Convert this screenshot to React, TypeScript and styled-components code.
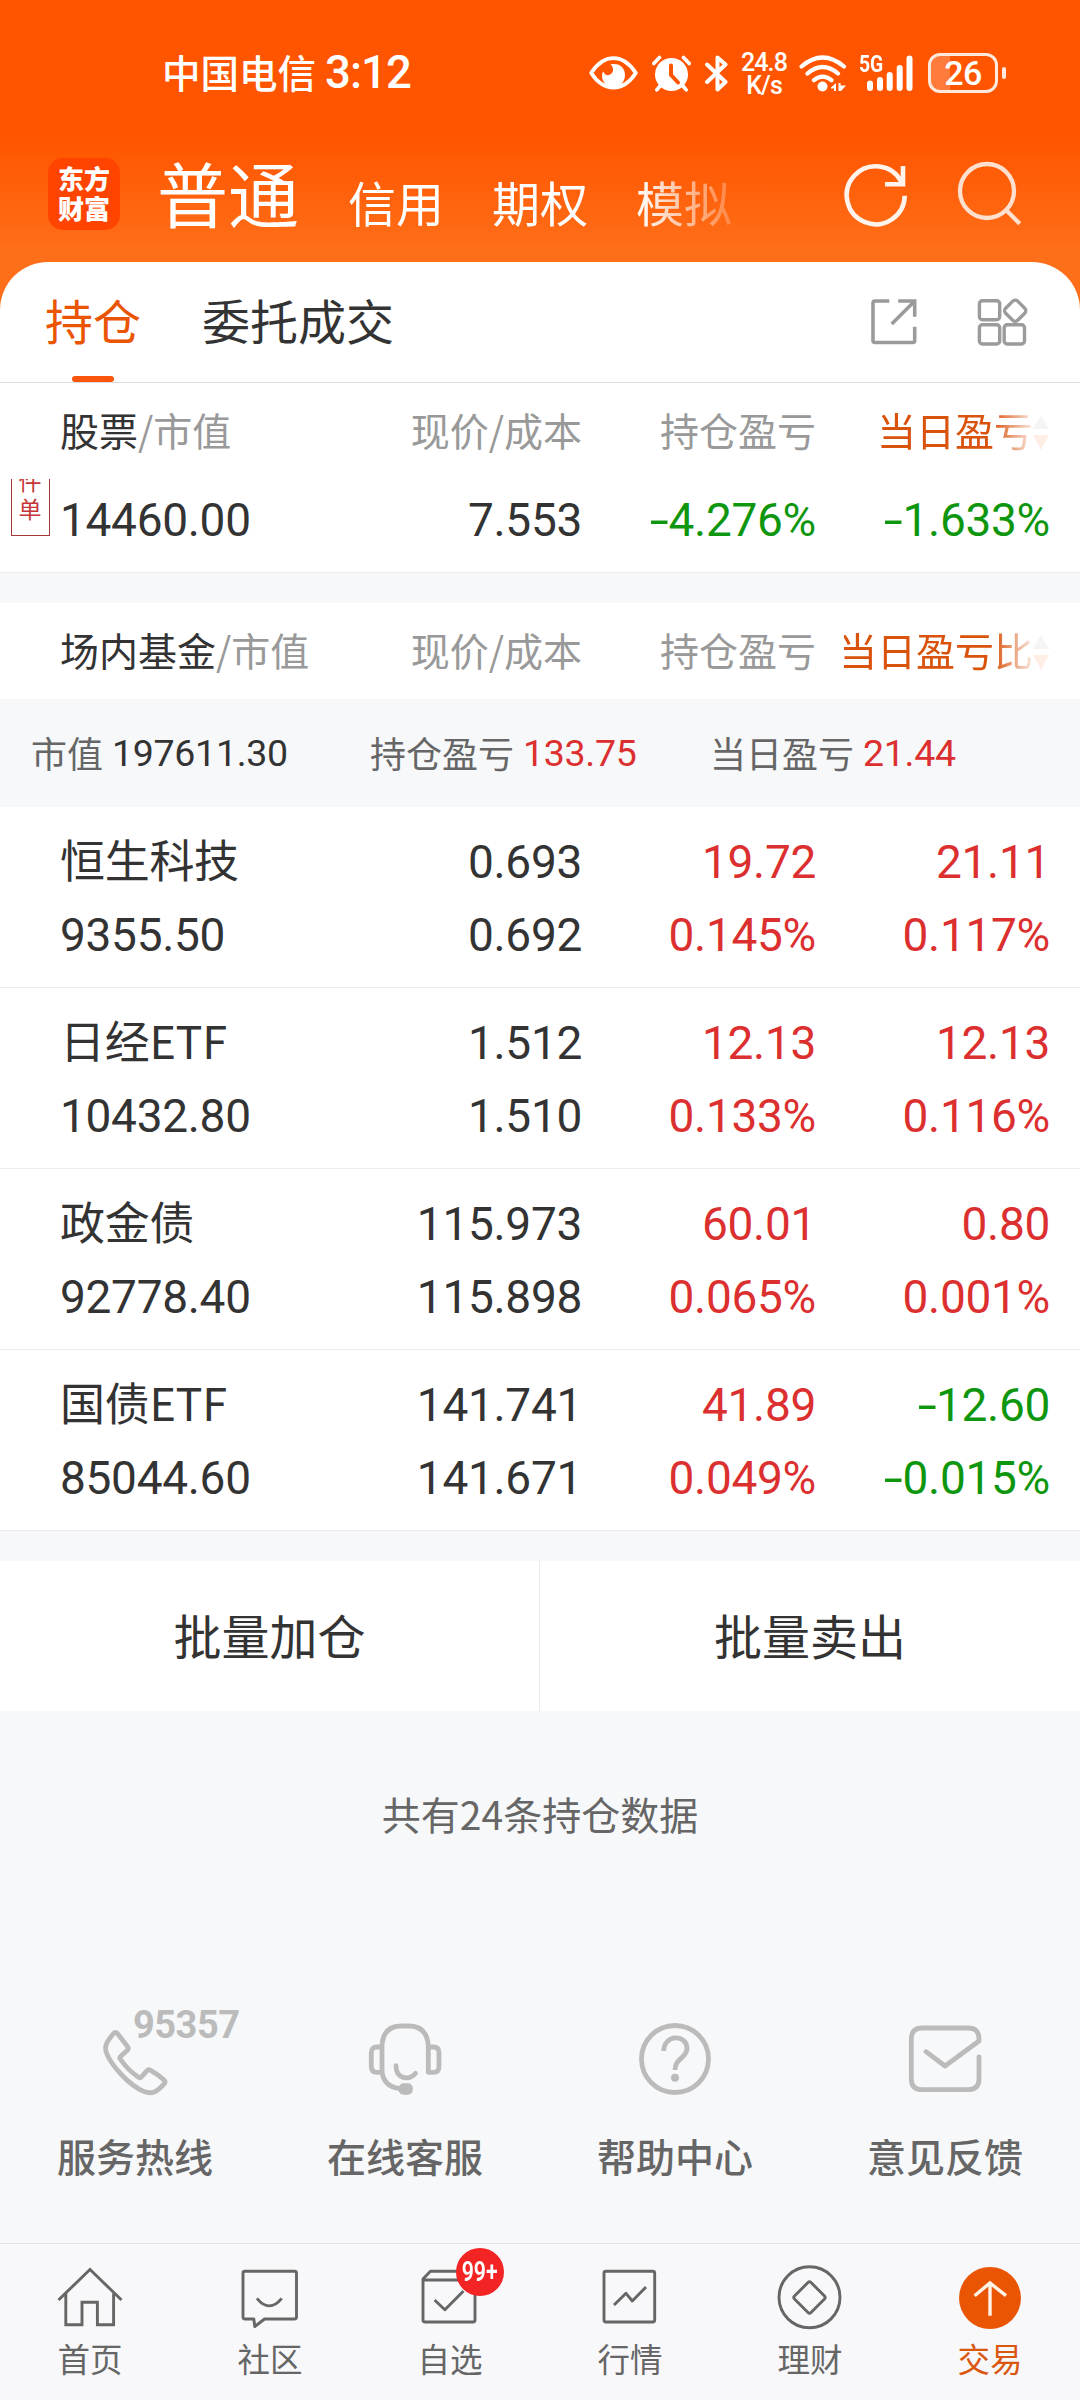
import React from 'react';
import styled, { createGlobalStyle } from 'styled-components';

const cjk = `'Noto Sans CJK SC', sans-serif`;
const num = `Roboto, 'Noto Sans CJK SC', sans-serif`;

const ink = '#333333';
const grey = '#999999';
const mid = '#666666';
const red = '#dc2f2f';
const green = '#0f960f';
const brand = '#ea5504';

const GlobalStyle = createGlobalStyle`
  * { box-sizing: border-box; }
  body { margin: 0; background: #f7f8fa; }
`;

const Page = styled.main`
  width: 1080px;
  height: 2400px;
  display: flex;
  flex-direction: column;
  overflow: hidden;
  background: #f7f8fa;
  color: ${ink};
  font-family: ${cjk};
`;

const Hero = styled.header`
  flex: none;
  height: 322px;
  margin-bottom: -60px;
  background: linear-gradient(#ff5500 0, #ff5500 140px, #ff6e18 250px, #ff6e18 100%);
  color: #fff;
`;

const StatusBar = styled.div`
  display: flex;
  align-items: center;
  height: 146px;
  padding: 0 75px 0 162px;
`;

const Carrier = styled.span`
  font: 500 38.5px/46px ${cjk};
  margin-top: -4px;
`;

const Clock = styled.span`
  font: 500 45.5px/46px ${num};
  letter-spacing: -0.9px;
  margin-left: 9px;
`;

const StatusIcons = styled.div`
  display: flex;
  align-items: center;
  margin-left: auto;
`;

const NetSpeed = styled.div`
  display: flex;
  flex-direction: column;
  align-items: center;
  width: 48px;
  margin: 1px 11px 0 12px;
  font: 500 25px/23px ${num};
  letter-spacing: -0.9px;
`;

const Signal = styled.div`
  position: relative;
  width: 56px;
  height: 36px;
  margin: 0 13px 0 12px;
`;

const SignalTag = styled.span`
  position: absolute;
  left: 0;
  top: -1px;
  font: 700 24.5px/20px ${num};
  transform: scaleX(0.79);
  transform-origin: left;
`;

const Battery = styled.div`
  position: relative;
  display: flex;
  align-items: center;
  justify-content: center;
  width: 70px;
  height: 40px;
  border: 3px solid #ffe9dc;
  border-radius: 12px;
  background: linear-gradient(90deg, #ff7b3c 19px, transparent 19px);
  font: 500 34px/34px ${num};
  letter-spacing: -0.6px;
  margin-right: 7px;

  &::after {
    content: '';
    position: absolute;
    right: -11px;
    top: 11px;
    width: 4px;
    height: 12px;
    border-radius: 2px;
    background: #ffe9dc;
  }
`;

const AccountBar = styled.div`
  display: flex;
  align-items: center;
  height: 96px;
  padding: 0 58px 0 48px;
`;

const Logo = styled.div`
  flex: none;
  display: flex;
  flex-direction: column;
  justify-content: center;
  width: 72px;
  height: 72px;
  margin-right: 37px;
  padding-bottom: 2px;
  border-radius: 15px;
  background: #ff4400;
  font: 900 26px/30px ${cjk};
  text-align: center;
`;

const AccountTabs = styled.nav`
  display: flex;
  align-items: baseline;
  gap: 48px;
  flex: none;
  width: 574px;
  height: 102px;
  overflow: hidden;
  mask-image: linear-gradient(90deg, #000 480px, transparent 600px);
`;

const AccountTab = styled.span<{ $on?: boolean }>`
  flex: none;
  font: 400 ${p => (p.$on ? 71 : 48)}px/96px ${cjk};
  margin-right: ${p => (p.$on ? 1 : 0)}px;
`;

const HeroActions = styled.div`
  display: flex;
  gap: 50px;
  margin-left: auto;
`;

const Panel = styled.section`
  flex: none;
  position: relative;
  border-radius: 48px 48px 0 0;
  background: #fff;
`;

const TabBar = styled.div`
  display: flex;
  align-items: stretch;
  height: 121px;
  padding: 0 53px 0 45px;
  border-bottom: 1px solid #dcdcdc;
`;

const Tab = styled.button<{ $on?: boolean }>`
  display: flex;
  flex-direction: column;
  align-items: center;
  justify-content: space-between;
  padding: 23px 0 0;
  margin-right: 61px;
  border: 0;
  background: none;
  color: ${p => (p.$on ? brand : ink)};
  font: 400 48px/68px ${cjk};

  &::after {
    content: '';
    width: 42px;
    height: 6px;
    border-radius: 3px;
    background: ${p => (p.$on ? '#f9560c' : 'transparent')};
  }
`;

const TabTools = styled.div`
  display: flex;
  align-items: center;
  gap: 60px;
  margin-left: auto;
`;

const HeadRow = styled.div`
  display: grid;
  grid-template-columns: 291px 231px 234px 234px;
  align-items: center;
  height: 96px;
  padding: 0 0 4px 60px;
  color: ${grey};
  font: 400 39px/60px ${cjk};
`;

const HeadCell = styled.div<{ $end?: boolean }>`
  white-space: nowrap;
  text-align: ${p => (p.$end ? 'right' : 'left')};
  b { color: ${ink}; font-weight: 400; }
`;

const SortCell = styled.div`
  display: flex;
  justify-content: flex-end;
  align-items: center;
  width: 205px;
  margin-left: 28px;
  overflow: hidden;
  white-space: nowrap;
  color: #d9530c;
  mask-image: linear-gradient(90deg, #000 148px, rgba(0, 0, 0, 0.1) 190px);
`;

const SortText = styled.span`
  flex: none;
`;

const SortMark = styled.svg`
  flex: none;
  margin-top: 8px;
`;

const HoldingRow = styled.div<{ $single?: boolean }>`
  position: relative;
  display: grid;
  grid-template-columns: 291px 231px 234px 234px;
  align-items: start;
  height: ${p => (p.$single ? 94 : 181)}px;
  padding: ${p => (p.$single ? 5 : 19)}px 0 0 60px;
  border-bottom: 1px solid #ececee;
`;

const Pair = styled.div<{ $end?: boolean; $tone?: string }>`
  display: flex;
  flex-direction: column;
  align-items: ${p => (p.$end ? 'flex-end' : 'flex-start')};
  color: ${p => p.$tone || ink};
  font: 400 46px/73px ${num};
  letter-spacing: -0.3px;
`;

const Name = styled.span`
  font: 400 45px/73px ${cjk};
  margin: -4px 0 4px;
`;

const Minus = styled.span`
  display: inline-block;
  transform: scaleX(1.5);
  transform-origin: right;
`;

const OrderTag = styled.span`
  position: absolute;
  left: 11px;
  top: 0;
  display: flex;
  flex-direction: column;
  justify-content: flex-end;
  width: 39px;
  height: 57px;
  overflow: hidden;
  padding: 0 1px 13px 0;
  border: 1px solid #a33a3a;
  border-top: 0;
  color: #c63636;
  font: 400 23px/28px ${cjk};
  text-align: center;
`;

const Gap = styled.div`
  height: 30px;
  background: #f7f8fa;
`;

const Summary = styled.div`
  display: grid;
  grid-template-columns: 339px 340px 1fr;
  align-items: center;
  height: 108px;
  padding-left: 31px;
  background: #f7f8fa;
  color: ${mid};
  font: 400 36px/60px ${cjk};
`;

const SummaryItem = styled.div`
  display: flex;
  align-items: center;
  gap: 9px;
`;

const SummaryLabel = styled.span`
  margin-top: -3px;
`;

const Figure = styled.span<{ $tone?: string }>`
  color: ${p => p.$tone || ink};
  font: 400 37.5px/60px ${num};
  letter-spacing: -0.3px;
`;

const BatchBar = styled.div`
  display: grid;
  grid-template-columns: 539px 541px;
  height: 150px;
  background: #fff;
`;

const BatchButton = styled.button`
  border: 0;
  padding: 0 0 4px;
  background: none;
  color: ${ink};
  font: 400 48px/60px ${cjk};

  & + & { border-left: 1px solid #ececee; }
`;

const Total = styled.p`
  flex: none;
  margin: 72px 0 0;
  text-align: center;
  color: ${mid};
  font: 400 39px/60px ${cjk};
`;

const Services = styled.div`
  flex: none;
  display: grid;
  grid-template-columns: repeat(4, 1fr);
  margin-top: 180px;
`;

const Service = styled.div`
  position: relative;
  display: flex;
  flex-direction: column;
  align-items: center;
  color: ${mid};
  font: 500 39px/60px ${cjk};
  gap: 30px;
`;

const Hotline = styled.span`
  position: absolute;
  left: 133px;
  top: -17px;
  color: #bbbbbb;
  font: 700 38px/38px ${num};
  letter-spacing: -0.5px;
`;

const NavBar = styled.nav`
  flex: none;
  display: grid;
  grid-template-columns: repeat(6, 1fr);
  height: 157px;
  margin-top: auto;
  border-top: 1px solid #dfe0e2;
  background: #f8f8fa;
`;

const NavItem = styled.div<{ $on?: boolean }>`
  position: relative;
  display: flex;
  flex-direction: column;
  align-items: center;
  padding-top: 21px;
  color: ${p => (p.$on ? '#d9570f' : mid)};
  font: 400 32.5px/50px ${cjk};
  gap: 4px;
`;

const Badge = styled.span`
  position: absolute;
  left: 96px;
  top: 4px;
  display: flex;
  align-items: center;
  justify-content: center;
  width: 48px;
  height: 48px;
  border-radius: 50%;
  background: #f22424;
  color: #fff;
  font: 600 28px/48px ${num};

  span { transform: scaleX(0.76); }
`;

const Line = ({ w, h, sw, color = 'currentColor', children }: any) => (
  <svg width={w} height={h} viewBox={`0 0 ${w} ${h}`} fill="none" stroke={color} strokeWidth={sw}
    strokeLinejoin="round" overflow="visible">{children}</svg>
);

const IconGroup = styled.div`
  display: flex;
  align-items: center;
  gap: 14px;
`;

const EyeIcon = () => (
  <svg width="49" height="34" viewBox="0 0 49 34" fill="none">
    <path d="M2.2 17C8 8 15 2.2 24.5 2.2S41 8 46.8 17C41 26 34 31.6 24.5 31.6S8 26 2.2 17Z" stroke="#fff" strokeWidth="3.8" strokeLinejoin="round" />
    <path d="M21.500 8.200C31 6.500 36 12 36 19C36 26 31 31 24.500 31S13 26 13 20C13 18 13.500 16.500 14.500 15.500C15.500 19 18.500 20 21 18.500C25 16.500 25 11.500 21.500 8.200Z" fill="#fff" />
  </svg>
);

const AlarmIcon = () => (
  <svg width="39" height="37" viewBox="0 0 39 37" fill="none" strokeLinecap="round">
    <circle cx="19.500" cy="19.500" r="16.500" fill="#fff" />
    <path d="M1.800 8.500L7.500 2.500M37.200 8.500L31.500 2.500M8 31L4.800 34.800M31 31L34.200 34.800" stroke="#fff" strokeWidth="3.600" />
    <path d="M19 10.500V20L26 27.500" stroke="#ff5500" strokeWidth="4" strokeLinejoin="round" />
  </svg>
);

const BluetoothIcon = () => (
  <svg width="23" height="37" viewBox="0 0 23 37" fill="none" stroke="#fff" strokeWidth="4" strokeLinejoin="round" strokeLinecap="round">
    <path d="M2 9.500L20.500 27L12.500 34.500V2.500L20.500 9.500L2 27" />
  </svg>
);

const WifiIcon = () => (
  <svg width="48" height="37" viewBox="0 0 48 37" fill="none" stroke="#fff" strokeWidth="4.200" strokeLinecap="round">
    <path d="M2.500 11.500Q23.500 -6.500 45 11.500M8.500 18.500Q23.500 5.500 39 18.500M15 25.200Q23.500 18 32.500 25.200" />
    <circle cx="23.500" cy="31.500" r="5" fill="#fff" stroke="none" />
    <path d="M32 32.500L37 28V36H35V33.500H32ZM39.500 28H41.500V30.500H47L42 36H39.500Z" fill="#fff" stroke="none" />
  </svg>
);

const SignalIcon = () => (
  <svg width="56" height="36" viewBox="0 0 56 36" stroke="#fff" strokeWidth="6" strokeLinecap="round">
    <path d="M11 28.500V33M21 25V33M30.700 20V33M40.700 13V33M50.500 3.500V33" />
  </svg>
);

const services = [
  {
    label: '服务热线',
    art: (
      <path d="M16.400 9.300Q17.500 9.300 18 10L28.500 23.500Q30 25.500 28.500 27L21.500 33.500Q20.300 34.700 21.300 36Q29 47.500 40 54.500Q41.300 55.300 42.400 54L48 47.600Q49.500 46 51.300 47.200Q59 51.500 65 57Q67 58.800 65.300 60.600C57.500 69.500 53 71.500 45 68.500C30 62.500 12 42 7.500 30C5 23 7.500 19 14.500 10.500Q15.400 9.300 16.400 9.300Z" />
    ),
  },
  {
    label: '在线客服',
    art: (
      <>
        <path d="M30.500 65.700Q13 63 13 46V23Q14 3 32 3H40Q58 3 59.300 23V49.300H64.500Q70 49.300 70 43.500V30Q70 24 64.500 24H59.300M13 24H8Q2.300 24 2.300 30V43.500Q2.300 49.300 8 49.300H13" />
        <path d="M27 42.700C27 56 40 58 46.500 50.300" strokeLinecap="round" />
        <rect x="29.600" y="60.300" width="14.200" height="11.500" rx="5" fill="#bbb" stroke="none" />
      </>
    ),
  },
  {
    label: '帮助中心',
    art: (
      <>
        <circle cx="36" cy="36" r="33.500" />
        <path d="M24.800 28C24.800 11 48 11 48 25.500C48 35 36 35 36 47" />
        <circle cx="36" cy="54.700" r="4" fill="#bbb" stroke="none" />
      </>
    ),
  },
  {
    label: '意见反馈',
    art: (
      <path strokeLinecap="round" d="M17 28.700L36 43L70 18V16Q70 5 59 5H13Q2.300 5 2.300 16V55.700Q2.300 66.700 13 66.700H59Q70 66.700 70 55.700V34" />
    ),
  },
];

const navItems = [
  {
    label: '首页',
    art: <path strokeLinejoin="miter" d="M0.500 35L32 4.500L63.500 35M7.800 28.500V59.700H24V37.300H39.400V59.700H55.600V28.500" />,
  },
  {
    label: '社区',
    art: <path d="M7 6.300H56.500Q58.500 6.300 58.500 8.300V52Q58.500 54 56.500 54H26.500L16.800 61.500L15.800 54H7Q5 54 5 52V8.300Q5 6.300 7 6.300ZM18.900 33.300Q31.300 48.500 43.700 33.300" />,
  },
  {
    label: '自选',
    badge: '99+',
    art: <path d="M5 15H57V55Q57 57 55 57H7Q5 57 5 55V14L12.400 6.300H50L57 15M16.600 35L26.900 44.700L45.500 26" />,
  },
  {
    label: '行情',
    art: <path d="M8 6.300H54.700Q56.700 6.300 56.700 8.300V55Q56.700 57 54.700 57H8Q6 57 6 55V8.300Q6 6.300 8 6.300ZM16 40L28 28.300L34.300 36L48 22" />,
  },
  {
    label: '理财',
    art: (
      <>
        <circle cx="31.500" cy="32.300" r="30.500" />
        <path d="M30 17.500Q31.500 16 33 17.500L46.500 31Q48 32.500 46.500 34L33 47.500Q31.500 49 30 47.500L16.500 34Q15 32.500 16.500 31Z" />
      </>
    ),
  },
  {
    label: '交易',
    on: true,
    art: (
      <>
        <circle cx="32" cy="33" r="31" fill={brand} stroke="none" />
        <path d="M32 50.700V18.500M16.600 30.700L32 18L48 30.700" stroke="#fff3e6" strokeLinejoin="miter" strokeWidth="3.400" />
      </>
    ),
  },
];

const holdings = [
  { name: '恒生科技', value: '9355.50', price: ['0.693', '0.692'], total: ['19.72', '0.145%'], day: ['21.11', '0.117%'] },
  { name: '日经ETF', value: '10432.80', price: ['1.512', '1.510'], total: ['12.13', '0.133%'], day: ['12.13', '0.116%'] },
  { name: '政金债', value: '92778.40', price: ['115.973', '115.898'], total: ['60.01', '0.065%'], day: ['0.80', '0.001%'] },
  { name: '国债ETF', value: '85044.60', price: ['141.741', '141.671'], total: ['41.89', '0.049%'], day: ['-12.60', '-0.015%'] },
];

const Amount = ({ v }: { v: string }) => (
  <span>{v[0] === '-' ? <><Minus>-</Minus>{v.slice(1)}</> : v}</span>
);

const toneOf = (v: string) => (v[0] === '-' ? green : red);

const TableHead = ({ title, sort }: { title: string; sort: string }) => (
  <HeadRow>
    <HeadCell><b>{title}</b>/市值</HeadCell>
    <HeadCell $end>现价/成本</HeadCell>
    <HeadCell $end>持仓盈亏</HeadCell>
    <SortCell>
      <SortText>{sort}</SortText>
      <SortMark width="16" height="36" viewBox="0 0 16 36">
        <path d="M8 0L16 14H0Z" fill="#999" />
        <path d="M8 35L16 20H0Z" fill="#f9560c" />
      </SortMark>
    </SortCell>
  </HeadRow>
);

export default function App() {
  return (
    <Page>
      <GlobalStyle />
      <Hero>
        <StatusBar>
          <Carrier>中国电信</Carrier>
          <Clock>3:12</Clock>
          <StatusIcons>
            <IconGroup>
              <EyeIcon />
              <AlarmIcon />
              <BluetoothIcon />
            </IconGroup>
            <NetSpeed><span>24.8</span><span>K/s</span></NetSpeed>
            <WifiIcon />
            <Signal><SignalTag>5G</SignalTag><SignalIcon /></Signal>
            <Battery>26</Battery>
          </StatusIcons>
        </StatusBar>
        <AccountBar>
          <Logo><span>东方</span><span>财富</span></Logo>
          <AccountTabs>
            <AccountTab $on>普通</AccountTab>
            <AccountTab>信用</AccountTab>
            <AccountTab>期权</AccountTab>
            <AccountTab>模拟</AccountTab>
          </AccountTabs>
          <HeroActions>
            <Line w={64} h={64} sw={4.6} color="#fff3ec">
              <path d="M60.700 33.700A29 29 0 1 1 57.500 20" />
              <path d="M59 4V22.300H41" strokeLinejoin="miter" />
            </Line>
            <Line w={64} h={64} sw={4.3} color="#ffe0cf">
              <circle cx="29" cy="29" r="27" />
              <path d="M47.600 47.500L61.700 61.700" />
            </Line>
          </HeroActions>
        </AccountBar>
      </Hero>

      <Panel>
        <TabBar>
          <Tab $on>持仓</Tab>
          <Tab>委托成交</Tab>
          <TabTools>
            <Line w={46} h={46} sw={3.6} color="#9b9b9b">
              <path d="M18.300 2H4Q2 2 2 4V41.500Q2 43.500 4 43.500H41.700Q43.700 43.500 43.700 41.500V27.700" />
              <path d="M27.200 2H43.700V17.700M43.700 2L20.700 25" strokeLinejoin="miter" />
            </Line>
            <Line w={50} h={48} sw={3.4} color="#9b9b9b">
              <rect x="2.400" y="2.700" width="20.300" height="19" rx="3" />
              <rect x="2.400" y="26.700" width="20.300" height="19.300" rx="3" />
              <rect x="27.200" y="26.700" width="20.300" height="19.300" rx="3" />
              <rect x="29.700" y="4.200" width="17" height="17" rx="3.500" transform="rotate(45 38.200 12.700)" />
            </Line>
          </TabTools>
        </TabBar>

        <TableHead title="股票" sort="当日盈亏" />
        <HoldingRow $single>
          <OrderTag><span>件</span><span>单</span></OrderTag>
          <Pair>14460.00</Pair>
          <Pair $end>7.553</Pair>
          <Pair $end $tone={green}><Amount v="-4.276%" /></Pair>
          <Pair $end $tone={green}><Amount v="-1.633%" /></Pair>
        </HoldingRow>
        <Gap />

        <TableHead title="场内基金" sort="当日盈亏比" />
        <Summary>
          <SummaryItem><SummaryLabel>市值</SummaryLabel><Figure>197611.30</Figure></SummaryItem>
          <SummaryItem><SummaryLabel>持仓盈亏</SummaryLabel><Figure $tone={red}>133.75</Figure></SummaryItem>
          <SummaryItem><SummaryLabel>当日盈亏</SummaryLabel><Figure $tone={red}>21.44</Figure></SummaryItem>
        </Summary>
        {holdings.map(r => (
          <HoldingRow key={r.name}>
            <Pair><Name>{r.name}</Name><span>{r.value}</span></Pair>
            <Pair $end>{r.price.map(v => <Amount key={v} v={v} />)}</Pair>
            <Pair $end $tone={toneOf(r.total[0])}>{r.total.map(v => <Amount key={v} v={v} />)}</Pair>
            <Pair $end $tone={toneOf(r.day[0])}>{r.day.map(v => <Amount key={v} v={v} />)}</Pair>
          </HoldingRow>
        ))}
        <Gap />
        <BatchBar>
          <BatchButton>批量加仓</BatchButton>
          <BatchButton>批量卖出</BatchButton>
        </BatchBar>
      </Panel>

      <Total>共有24条持仓数据</Total>

      <Services>
        {services.map((s, i) => (
          <Service key={s.label}>
            <Line w={72} h={72} sw={4.8} color="#bbbbbb">{s.art}</Line>
            {i === 0 && <Hotline>95357</Hotline>}
            <span>{s.label}</span>
          </Service>
        ))}
      </Services>

      <NavBar>
        {navItems.map(n => (
          <NavItem key={n.label} $on={n.on}>
            <Line w={64} h={64} sw={2.9} color={mid}>{n.art}</Line>
            {n.badge && <Badge><span>{n.badge}</span></Badge>}
            <span>{n.label}</span>
          </NavItem>
        ))}
      </NavBar>
    </Page>
  );
}
